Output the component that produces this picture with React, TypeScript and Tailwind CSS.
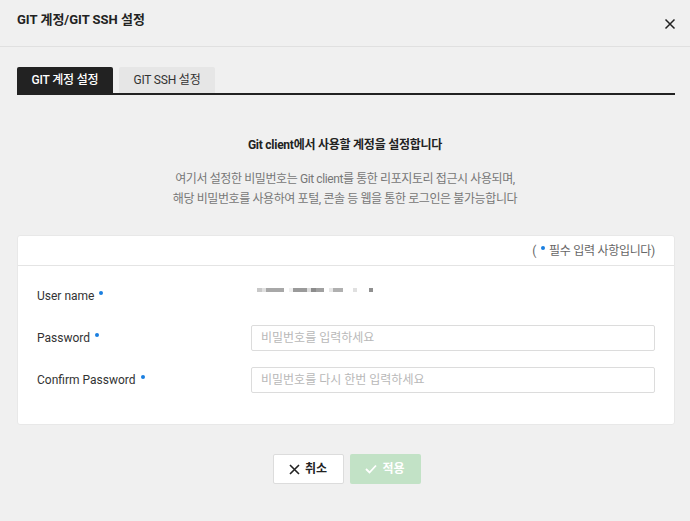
import React from "react";

const font = { fontFamily: 'Roboto, "Noto Sans CJK KR", sans-serif' };

function Dot() {
  return <span className="inline-block w-[4px] h-[4px] rounded-full bg-[#1a7fe0] ml-[5px] -translate-y-[5px]" />;
}

const blocks: [number, string][] = [
  [5, "#c8c8c8"], [4, "#e0e0e0"], [18, "#a8a8a8"], [5, "#ffffff"], [4, "#efefef"],
  [14, "#9a9a9a"], [4, "#dcdcdc"], [5, "#8c8c8c"], [8, "#a0a0a0"], [5, "#ffffff"],
  [4, "#e6e6e6"], [10, "#b0b0b0"], [10, "#ffffff"], [4, "#e0e0e0"], [12, "#ffffff"], [4, "#909090"],
];

export default function App() {
  return (
    <div className="w-[690px] h-[521px] bg-[#f0f0f0] flex flex-col text-[#222]" style={font}>
      <div className="h-[47px] border-b border-[#e0e0e0] flex items-center justify-between pl-[17px] pr-[14px] shrink-0">
        <div className="text-[13px] font-bold -mt-[6px]">GIT 계정/GIT SSH 설정</div>
        <svg width="12" height="12" viewBox="0 0 12 12" className="mt-[2px]">
          <path d="M1.5 1.5 L10.5 10.5 M10.5 1.5 L1.5 10.5" stroke="#222" strokeWidth="1.5" />
        </svg>
      </div>
      <div className="px-[17px] pt-[20px] pr-[15px]">
        <div className="flex items-end gap-[6px] border-b-[2px] border-[#222]">
          <div className="w-[96px] h-[26px] bg-[#222] text-white text-[12px] font-medium flex items-center justify-center rounded-t-[2px] tracking-[-0.2px]">GIT 계정 설정</div>
          <div className="w-[96px] h-[26px] bg-[#e6e6e6] text-[#333] text-[12px] flex items-center justify-center rounded-t-[2px] tracking-[-0.2px]">GIT SSH 설정</div>
        </div>
      </div>
      <div className="mt-[41px] text-center text-[12px] font-bold text-[#222] tracking-[-0.25px]">Git client에서 사용할 계정을 설정합니다</div>
      <div className="mt-[15px] text-center text-[12px] text-[#777] leading-[20px] tracking-[-0.4px]">
        <div>여기서 설정한 비밀번호는 Git client를 통한 리포지토리 접근시 사용되며,</div>
        <div>해당 비밀번호를 사용하여 포털, 콘솔 등 웹을 통한 로그인은 불가능합니다</div>
      </div>
      <div className="mx-[17px] mr-[15px] mt-[26px] bg-white rounded-[3px] border border-[#e8e8e8] h-[190px] shrink-0">
        <div className="h-[30px] border-b border-[#e4e4e4] flex items-center justify-end pr-[19px] text-[12px] text-[#666] tracking-[-0.3px]">
          <span>(</span>
          <span className="inline-block w-[4px] h-[4px] rounded-full bg-[#1a7fe0] ml-[5px] mr-[4px] -translate-y-[3px]" />
          <span>필수 입력 사항입니다)</span>
        </div>
        <div className="pl-[19px] pr-[19px] pt-[17px] flex flex-col gap-[16px]">
          <div className="flex items-center h-[26px]">
            <div className="w-[215px] text-[12px] text-[#333]">User name<Dot /></div>
            <div className="flex items-center h-[4px] -mt-[12px] ml-[5px]">
              {blocks.map(([w, c], i) => (
                <span key={i} style={{ width: w, backgroundColor: c }} className="h-[4px] block" />
              ))}
            </div>
          </div>
          <div className="flex items-center h-[26px]">
            <div className="w-[215px] text-[12px] text-[#333]">Password<Dot /></div>
            <input
              type="password"
              placeholder="비밀번호를 입력하세요"
              className="flex-1 h-[26px] border border-[#dcdcdc] rounded-[2px] px-[9px] text-[12px] placeholder:text-[#b8b8b8] outline-none -ml-[1px]"
              style={font}
            />
          </div>
          <div className="flex items-center h-[26px]">
            <div className="w-[215px] text-[12px] text-[#333]">Confirm Password<Dot /></div>
            <input
              type="password"
              placeholder="비밀번호를 다시 한번 입력하세요"
              className="flex-1 h-[26px] border border-[#dcdcdc] rounded-[2px] px-[9px] text-[12px] placeholder:text-[#b8b8b8] outline-none -ml-[1px]"
              style={font}
            />
          </div>
        </div>
      </div>
      <div className="mt-[29px] flex justify-center gap-[6px] pl-[3px]">
        <button className="w-[71px] h-[30px] bg-white border border-[#dcdcdc] rounded-[2px] flex items-center justify-center gap-[5px] text-[12px] font-bold text-[#222]" style={font}>
          <svg width="11" height="11" viewBox="0 0 11 11">
            <path d="M1 1 L10 10 M10 1 L1 10" stroke="#222" strokeWidth="1.6" />
          </svg>
          취소
        </button>
        <button className="w-[71px] h-[30px] bg-[#c2e2c6] rounded-[2px] flex items-center justify-center gap-[5px] text-[12px] font-bold text-white" style={font}>
          <svg width="12" height="10" viewBox="0 0 12 10">
            <path d="M1 5 L4.5 8.5 L11 1.5" stroke="#fff" strokeWidth="1.8" fill="none" />
          </svg>
          적용
        </button>
      </div>
    </div>
  );
}
